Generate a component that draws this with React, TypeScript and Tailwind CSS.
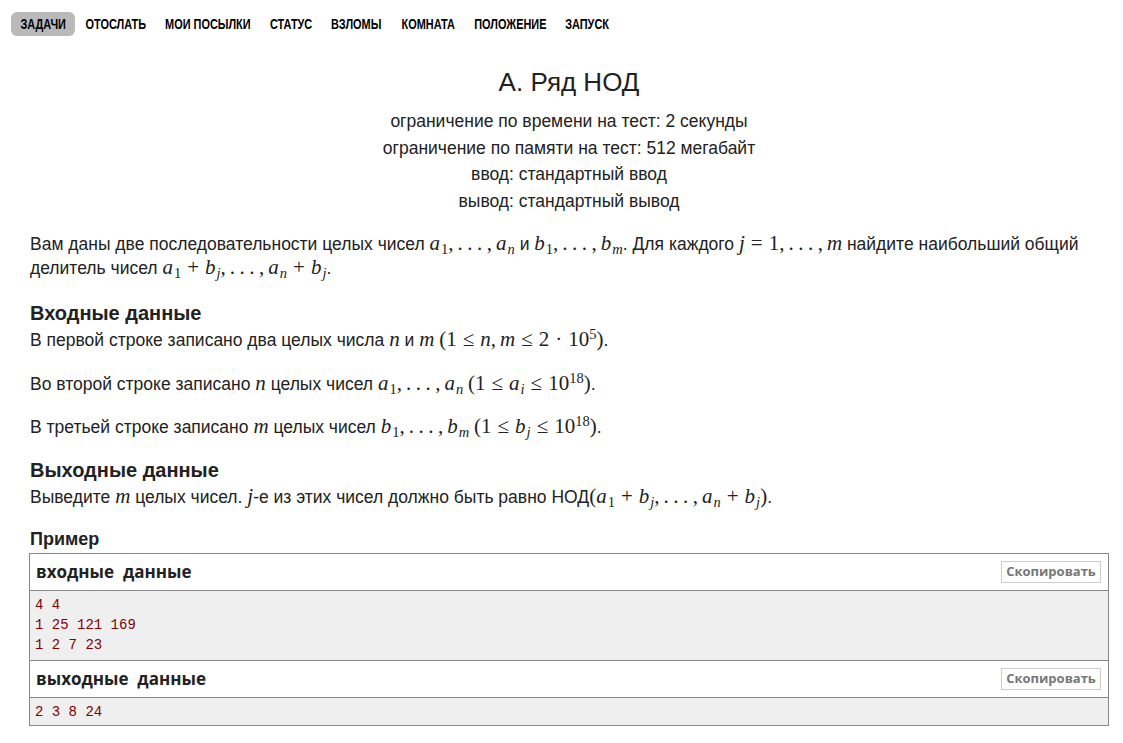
import type { ReactNode } from "react";

const navItems = [
  { label: "ЗАДАЧИ", w: "w-[64px] mr-[2px]" },
  { label: "ОТОСЛАТЬ", w: "w-[78px]" },
  { label: "МОИ ПОСЫЛКИ", w: "w-[106px]" },
  { label: "СТАТУС", w: "w-[60px]" },
  { label: "ВЗЛОМЫ", w: "w-[70px]" },
  { label: "КОМНАТА", w: "w-[74px]" },
  { label: "ПОЛОЖЕНИЕ", w: "w-[91px]" },
  { label: "ЗАПУСК", w: "w-[63px]" },
];

// math helpers
function M({ children }: { children: ReactNode }) {
  return <span className="font-['Liberation_Serif',serif] text-[21px] leading-none whitespace-nowrap">{children}</span>;
}
function V({ children }: { children: ReactNode }) {
  return <span className="italic">{children}</span>;
}
function Sub({ children }: { children: ReactNode }) {
  return <sub className="text-[14.5px] ml-[1px]">{children}</sub>;
}
function Sup({ children }: { children: ReactNode }) {
  return <sup className="text-[14.5px]">{children}</sup>;
}
function Op({ children }: { children: ReactNode }) {
  return <span className="mx-[6px]">{children}</span>;
}
function Dots() {
  return (
    <span>
      ,<span className="ml-[4px] tracking-[4.5px]">...</span>,<span className="ml-[4px]" />
    </span>
  );
}

function SampleHead({ title }: { title: string }) {
  return (
    <div className="flex items-center justify-between bg-white h-[37px] border-b border-[#888] pl-[6px] pr-[7px]">
      <span className="font-['Open_Sans',sans-serif] font-bold text-[17px] text-[#222] whitespace-pre">{title}</span>
      <span className="border border-[#ccc] h-[22px] w-[100px] flex items-center justify-center font-['Open_Sans',sans-serif] font-bold text-[13px] text-[#777]">
        Скопировать
      </span>
    </div>
  );
}

export default function App() {
  return (
    <div className="min-h-[743px] bg-white text-[#222] font-['Liberation_Sans',Arial,sans-serif]">
      {/* nav */}
      <nav className="flex pl-[11px] pt-[12px]">
        {navItems.map((item, i) => (
          <span
            key={item.label}
            className={
              "h-[24px] flex items-center justify-center rounded-[6px] whitespace-nowrap " +
              item.w +
              " " +
              (i === 0 ? "bg-[#b9b9b9]" : "")
            }
          >
            <span className="inline-block scale-x-[0.78] font-bold text-[14px] text-black">{item.label}</span>
          </span>
        ))}
      </nav>

      <main className="ml-[29px] w-[1080px] pt-[31px]">
        {/* header */}
        <div className="text-center">
          <h1 className="text-[26px] leading-[30px]">A. Ряд НОД</h1>
          <div className="mt-[11px] text-[17.5px] leading-[26.5px]">
            <div>ограничение по времени на тест: 2 секунды</div>
            <div>ограничение по памяти на тест: 512 мегабайт</div>
            <div>ввод: стандартный ввод</div>
            <div>вывод: стандартный вывод</div>
          </div>
        </div>

        {/* legend */}
        <p className="mt-[18px] pl-[1px] text-[17.5px] leading-[24px]">
          Вам даны две последовательности целых чисел{" "}
          <M>
            <V>a</V>
            <Sub>1</Sub>
            <Dots />
            <V>a</V>
            <Sub>
              <V>n</V>
            </Sub>
          </M>{" "}
          и{" "}
          <M>
            <V>b</V>
            <Sub>1</Sub>
            <Dots />
            <V>b</V>
            <Sub>
              <V>m</V>
            </Sub>
          </M>
          . Для каждого{" "}
          <M>
            <V>j</V>
            <Op>=</Op>1<Dots />
            <V>m</V>
          </M>{" "}
          найдите наибольший общий делитель чисел{" "}
          <M>
            <V>a</V>
            <Sub>1</Sub>
            <Op>+</Op>
            <V>b</V>
            <Sub>
              <V>j</V>
            </Sub>
            <Dots />
            <V>a</V>
            <Sub>
              <V>n</V>
            </Sub>
            <Op>+</Op>
            <V>b</V>
            <Sub>
              <V>j</V>
            </Sub>
          </M>
          .
        </p>

        {/* input */}
        <h2 className="mt-[22px] pl-[1px] text-[20px] leading-[22px] font-bold">Входные данные</h2>
        <div className="pl-[1px] text-[17.5px] leading-[24px]">
          <p className="mt-[4px]">
            В первой строке записано два целых числа{" "}
            <M>
              <V>n</V>
            </M>{" "}
            и{" "}
            <M>
              <V>m</V>
            </M>{" "}
            <M>
              (1<Op>≤</Op>
              <V>n</V>,<span className="ml-[4px]" />
              <V>m</V>
              <Op>≤</Op>2<Op>·</Op>10<Sup>5</Sup>)
            </M>
            .
          </p>
          <p className="mt-[20px]">
            Во второй строке записано{" "}
            <M>
              <V>n</V>
            </M>{" "}
            целых чисел{" "}
            <M>
              <V>a</V>
              <Sub>1</Sub>
              <Dots />
              <V>a</V>
              <Sub>
                <V>n</V>
              </Sub>
            </M>{" "}
            <M>
              (1<Op>≤</Op>
              <V>a</V>
              <Sub>
                <V>i</V>
              </Sub>
              <Op>≤</Op>10<Sup>18</Sup>)
            </M>
            .
          </p>
          <p className="mt-[19px]">
            В третьей строке записано{" "}
            <M>
              <V>m</V>
            </M>{" "}
            целых чисел{" "}
            <M>
              <V>b</V>
              <Sub>1</Sub>
              <Dots />
              <V>b</V>
              <Sub>
                <V>m</V>
              </Sub>
            </M>{" "}
            <M>
              (1<Op>≤</Op>
              <V>b</V>
              <Sub>
                <V>j</V>
              </Sub>
              <Op>≤</Op>10<Sup>18</Sup>)
            </M>
            .
          </p>
        </div>

        {/* output */}
        <h2 className="mt-[20px] pl-[1px] text-[20px] leading-[22px] font-bold">Выходные данные</h2>
        <p className="mt-[4px] pl-[1px] text-[17.5px] leading-[24px]">
          Выведите{" "}
          <M>
            <V>m</V>
          </M>{" "}
          целых чисел.{" "}
          <M>
            <V>j</V>
          </M>
          -е из этих чисел должно быть равно НОД
          <M>
            (<V>a</V>
            <Sub>1</Sub>
            <Op>+</Op>
            <V>b</V>
            <Sub>
              <V>j</V>
            </Sub>
            <Dots />
            <V>a</V>
            <Sub>
              <V>n</V>
            </Sub>
            <Op>+</Op>
            <V>b</V>
            <Sub>
              <V>j</V>
            </Sub>
            )
          </M>
          .
        </p>

        {/* sample */}
        <h3 className="mt-[20px] pl-[1px] text-[18px] leading-[20px] font-bold">Пример</h3>
        <div className="mt-[4px] border border-[#888]">
          <SampleHead title="входные  данные" />
          <pre className="bg-[#efefef] font-['Liberation_Mono',monospace] text-[14px] leading-[20px] text-[#800000] px-[5px] pt-[4px] pb-[5px]">
            {["4 4", "1 25 121 169", "1 2 7 23"].join("\n")}
          </pre>
          <div className="border-t border-[#888]">
            <SampleHead title="выходные  данные" />
            <pre className="bg-[#efefef] font-['Liberation_Mono',monospace] text-[14px] leading-[20px] text-[#800000] px-[5px] pt-[4px] pb-[3px]">
              2 3 8 24
            </pre>
          </div>
        </div>
      </main>
    </div>
  );
}
